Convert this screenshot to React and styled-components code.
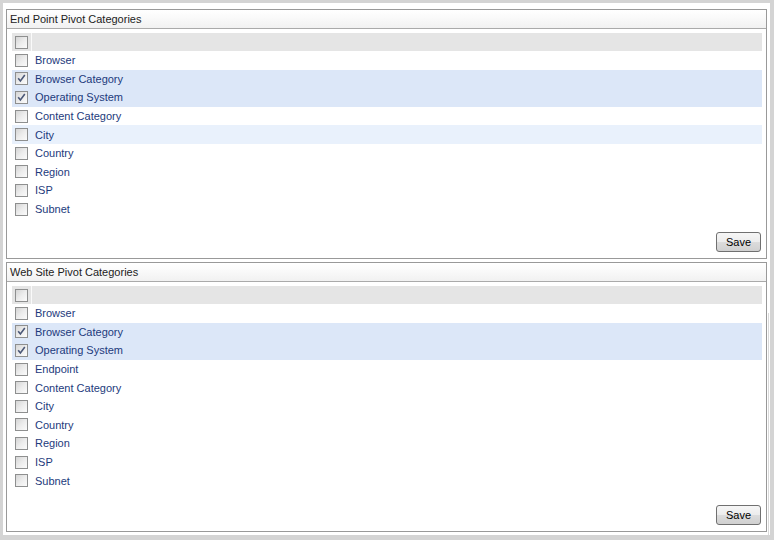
import React from 'react'
import styled, { createGlobalStyle } from 'styled-components'

const GlobalStyle = createGlobalStyle`
  html, body {
    margin: 0;
    padding: 0;
    background: #d4d4d4;
  }
  body {
    font-family: Tahoma, "DejaVu Sans", "Liberation Sans", sans-serif;
  }
`

const Frame = styled.div`
  margin: 3px 4px 5px 3px;
  width: 767px;
  height: 532px;
  box-sizing: border-box;
  background: #fff;
  padding: 6px 0 0 3px;
  display: flex;
`

const Column = styled.div`
  width: 761px;
  display: flex;
  flex-direction: column;
  gap: 3px;
`

const Track = styled.div`
  margin-left: 1px;
  width: 1px;
  margin-top: ${p => p.$top}px;
  margin-bottom: 0;
  background: #dadada;
`

const Panel = styled.div`
  height: ${p => p.$height}px;
  box-sizing: border-box;
  border: 1px solid #999;
  display: flex;
  flex-direction: column;
`

const PanelHeader = styled.div`
  height: 18px;
  border-bottom: 1px solid #aaa;
  background: linear-gradient(#fff 0%, #fafafa 40%, #f1f1f1 100%);
  padding-left: 3px;
  display: flex;
  align-items: center;
  font-family: "Liberation Sans", sans-serif;
  font-size: 11px;
  color: #222;
`

const Body = styled.div`
  flex: 1;
  padding: 4px 4px 0 5px;
`

const Row = styled.div`
  height: ${p => (p.$head ? 18 : 18.6)}px;
  display: flex;
  align-items: center;
  background: ${p =>
    p.$head ? '#e5e5e5' : p.$selected ? '#dce7f8' : p.$hover ? '#e9f1fc' : 'transparent'};
`

const CheckCell = styled.div`
  width: 19px;
  height: 100%;
  display: flex;
  align-items: center;
  justify-content: center;
  border-right: 1px solid ${p => (p.$head ? '#fafafa' : 'transparent')};
`

const Box = styled.div`
  width: 11px;
  height: 11px;
  border: 1px solid #8e8f8f;
  background: linear-gradient(135deg, #d5d5d5 0%, #ececec 50%, #fbfbfb 100%);
  position: relative;

  svg {
    position: absolute;
    left: 0;
    top: 0;
  }
`

const Label = styled.span`
  margin-left: 3px;
  font-family: "Liberation Sans", sans-serif;
  font-size: 11px;
  color: #1d3a7c;
`

const Footer = styled.div`
  display: flex;
  justify-content: flex-end;
  padding: 0 5px 6px 0;
`

const Button = styled.button`
  width: 45px;
  height: 20px;
  box-sizing: border-box;
  border: 1px solid #707070;
  border-radius: 3px;
  background: linear-gradient(#f6f6f6 0%, #ececec 50%, #dcdcdc 51%, #d0d0d0 100%);
  font-family: "Liberation Sans", sans-serif;
  font-size: 11px;
  color: #000;
  padding: 0;
`

const Check = ({ checked, head }) => (
  <CheckCell $head={head}>
    <Box>
      {checked && (
        <svg width='11' height='11' viewBox='0 0 11 11'>
          <path d='M2.2 5.2 L4.4 8 L8.8 2' fill='none' stroke='#4b5878' strokeWidth='1.6' />
        </svg>
      )}
    </Box>
  </CheckCell>
)

const PivotPanel = ({ title, items, height }) => (
  <Panel $height={height}>
    <PanelHeader>{title}</PanelHeader>
    <Body>
      <Row $head>
        <Check head />
      </Row>
      {items.map(it => (
        <Row key={it.name} $selected={it.checked} $hover={it.hover}>
          <Check checked={it.checked} />
          <Label>{it.name}</Label>
        </Row>
      ))}
    </Body>
    <Footer>
      <Button>Save</Button>
    </Footer>
  </Panel>
)

const endPoint = [
  { name: 'Browser' },
  { name: 'Browser Category', checked: true },
  { name: 'Operating System', checked: true },
  { name: 'Content Category' },
  { name: 'City', hover: true },
  { name: 'Country' },
  { name: 'Region' },
  { name: 'ISP' },
  { name: 'Subnet' }
]

const webSite = [
  { name: 'Browser' },
  { name: 'Browser Category', checked: true },
  { name: 'Operating System', checked: true },
  { name: 'Endpoint' },
  { name: 'Content Category' },
  { name: 'City' },
  { name: 'Country' },
  { name: 'Region' },
  { name: 'ISP' },
  { name: 'Subnet' }
]

const App = () => (
  <>
    <GlobalStyle />
    <Frame>
      <Column>
        <PivotPanel title='End Point Pivot Categories' items={endPoint} height={250} />
        <PivotPanel title='Web Site Pivot Categories' items={webSite} height={270} />
      </Column>
      <Track $top={304} />
    </Frame>
  </>
)

export default App
